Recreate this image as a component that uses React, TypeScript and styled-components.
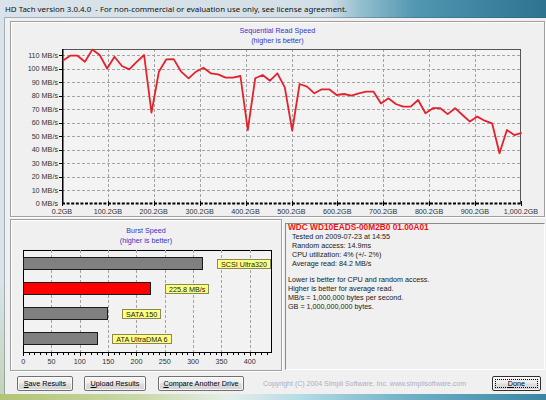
import React from 'react';
import styled, {createGlobalStyle} from 'styled-components';

const GlobalStyle = createGlobalStyle`
  html, body {
    margin: 0;
    padding: 0;
    background: #ffffff;
  }
  body {
    font-family: "Liberation Sans", Arial, sans-serif;
  }
`;

// sequential read samples, MB/s, evenly spread over the drive
const readSpeeds = [
  105.8, 109.5, 109.5, 105, 114, 110, 100, 108.7, 101.9, 99.4, 105, 110, 67.4,
  97.7, 106.8, 107, 97.7, 92.8, 97.7, 100.6, 96.5, 95.7, 93.3, 93.3, 94.5, 54.6,
  92.8, 95.2, 91, 96.5, 86.1, 54.1, 88.6, 86.6, 81.7, 84.7, 84.7, 80.5, 81.2, 80,
  81.7, 82.9, 82.9, 74.3, 78, 73.8, 71.8, 71.8, 76.8, 67, 70.7, 70.7, 66.4, 70.7,
  65.7, 60.8, 64.5, 61.5, 59.6, 37.4, 54.6, 50.9, 52.6,
];

const yLabels = [110, 100, 90, 80, 70, 60, 50, 40, 30, 20, 10, 0];
const xLabels = ['0.2GB', '100.2GB', '200.2GB', '300.2GB', '400.2GB', '500.2GB', '600.2GB', '700.2GB', '800.2GB', '900.2GB', '1,000.2GB'];

const burst = [
  {label: 'SCSI Ultra320', value: 320, color: '#808080'},
  {label: '225.8 MB/s', value: 225.8, color: '#ff0000'},
  {label: 'SATA 150', value: 150, color: '#808080'},
  {label: 'ATA UltraDMA 6', value: 133, color: '#808080'},
];
const burstTicks = [0, 50, 100, 150, 200, 250, 300, 350, 400];

const PLOT_W = 459;
const PLOT_H = 155;
const PX_PER_MB = 149 / 110;
const BURST_W = 249;
const BURST_H = 103;
const BURST_STEP = 28.33;

const Window = styled.div`
  width: 546px;
  height: 400px;
  display: flex;
  flex-direction: column;
  overflow: hidden;
  background:
    linear-gradient(180deg, rgba(255,255,255,0) 70%, rgba(168,190,120,0.45) 100%),
    linear-gradient(90deg, #d9e3e9 0%, #d3dfe6 60%, #93bfcf 66%, #5297b1 76%, #3f85a2 88%, #2e7390 100%);
`;

const TitleBar = styled.div`
  height: 18px;
  padding-left: 5px;
  display: flex;
  align-items: center;
  font-family: "Noto Sans", "Liberation Sans", sans-serif;
  font-size: 7.9px;
  color: #101010;
  white-space: pre;
`;

const Frame = styled.div`
  flex: 1;
  display: flex;
  padding: 0 7px 0 5px;
  min-height: 0;
`;

const BottomFrame = styled.div`
  height: 6px;
  background: linear-gradient(90deg, #b3c476 0%, #c9d8a8 25%, #e4eee8 42%, #b4dbe6 55%, #6fb0c6 75%, #3a86a3 100%);
`;

const Client = styled.div`
  flex: 1;
  display: flex;
  flex-direction: column;
  background: #f0f0f0;
  box-shadow: 0 0 0 1px rgba(60, 80, 100, 0.35);
  font-size: 7.2px;
  color: #202020;
`;

const GroupBox = styled.div`
  box-sizing: border-box;
  border: 1px solid #a0a0a0;
  box-shadow: inset 1px 1px 0 #ffffff, 1px 1px 0 #ffffff;
  display: flex;
  flex-direction: column;
`;

const TopPanel = styled(GroupBox)`
  margin: 3px 2px 0 5px;
  height: 196px;
  overflow: hidden;
`;

const ChartTitle = styled.div<{$lh: number; $top: number}>`
  color: #3535c8;
  text-align: center;
  line-height: ${p => p.$lh}px;
  padding-top: ${p => p.$top}px;
`;

const ChartBody = styled.div`
  display: grid;
  grid-template-columns: 51px ${PLOT_W}px;
  margin-top: 3px;
`;

const YAxis = styled.div`
  box-sizing: border-box;
  height: ${PLOT_H}px;
  padding: 6px 4px 0 0;
  display: flex;
  flex-direction: column;
  justify-content: space-between;
  align-items: flex-end;
`;

const YLabel = styled.div`
  height: 0;
  display: flex;
  align-items: center;
  white-space: nowrap;
  color: #303030;
`;

const Plot = styled.svg`
  display: block;
  overflow: visible;
`;

const XAxis = styled.div<{$offset: number; $step: number; $top: number}>`
  display: flex;
  margin-left: ${p => p.$offset}px;
  padding-top: ${p => p.$top}px;
  line-height: 14px;
  color: #303030;

  & > span {
    flex: 0 0 ${p => p.$step}px;
    text-align: center;
    white-space: nowrap;
  }
`;

const MiddleRow = styled.div`
  display: flex;
  margin: 2px 2px 0 5px;
  height: 152px;
`;

const BurstPanel = styled(GroupBox)`
  width: 272px;
`;

const BurstPlot = styled.div`
  position: relative;
  box-sizing: border-box;
  margin: 5px 0 0 12px;
  width: ${BURST_W}px;
  height: ${BURST_H}px;
  border: 1px solid #000000;
  background: #f2f2f2;
`;

const BurstGrid = styled.svg`
  position: absolute;
  left: -1px;
  top: -1px;
  overflow: visible;
`;

const BarList = styled.div`
  position: relative;
  display: flex;
  flex-direction: column;
  gap: 12px;
  padding-top: 6px;
  margin-left: -1px;
`;

const BarRow = styled.div`
  display: flex;
  align-items: center;
  height: 13px;
`;

const Bar = styled.div<{$color: string}>`
  box-sizing: border-box;
  height: 13px;
  background: ${p => p.$color};
  border: 1px solid #1a1a1a;
`;

const BarTag = styled.div`
  margin-left: 14px;
  padding: 0 3px;
  height: 10px;
  line-height: 10px;
  background: #ffff80;
  border: 1px solid #8a8a50;
  box-sizing: border-box;
  white-space: nowrap;
  color: #202020;
`;

const InfoPanel = styled.div`
  flex: 1;
  margin: 4px 0 1px 3px;
  padding-left: 2px;
  border-top: 1px solid #8a8a8a;
  border-left: 1px solid #8a8a8a;
  border-right: 1px solid #ffffff;
  border-bottom: 1px solid #ffffff;
  line-height: 9.1px;
`;

const DriveName = styled.div`
  color: #ee1111;
  font-weight: bold;
  font-size: 8.3px;
  line-height: 9px;
  margin-top: -1px;
  white-space: nowrap;
`;

const Stats = styled.div`
  padding-left: 4px;
`;

const Notes = styled.div`
  margin-top: 6.3px;
`;

const ButtonRow = styled.div`
  display: flex;
  align-items: center;
  height: 15px;
  margin-top: 5px;
  padding: 0 6px 0 12px;
`;

const Button = styled.button<{$w: number; $gap?: number; $primary?: boolean}>`
  width: ${p => p.$w}px;
  height: 15px;
  margin-left: ${p => p.$gap ?? 0}px;
  padding: 0;
  font-family: "Liberation Sans", Arial, sans-serif;
  font-size: 7.2px;
  color: #000000;
  border: 1px solid ${p => (p.$primary ? '#2f2f2f' : '#707070')};
  border-radius: 2px;
  background: linear-gradient(180deg, #f4f4f4 0%, #ececec 48%, #dedede 52%, #d2d2d2 100%);
  box-shadow: inset 0 0 0 1px rgba(255, 255, 255, 0.75);
  outline: ${p => (p.$primary ? '1px dotted #000' : 'none')};
  outline-offset: -4px;
  white-space: nowrap;
`;

const Copyright = styled.div`
  margin-left: 19px;
  color: #a9afc4;
  font-size: 7px;
  white-space: nowrap;
`;

const Spacer = styled.div`
  flex: 1;
`;

const ReadChart: React.FC = () => {
  const step = PLOT_W / (readSpeeds.length - 1);
  const points = readSpeeds
    .map((v, i) => `${(i * step + 0.7).toFixed(1)},${(PLOT_H - v * PX_PER_MB).toFixed(1)}`)
    .join(' ');
  const colStep = PLOT_W / 10;

  return (
    <Plot width={PLOT_W} height={PLOT_H}>
      <rect x={0} y={0} width={PLOT_W} height={PLOT_H} fill="#f3f3f3" />
      {yLabels.slice(0, -1).map(v => {
        const y = Math.round(PLOT_H - v * PX_PER_MB) + 0.5;
        return (
          <g key={v}>
            <line x1={0} x2={PLOT_W} y1={y} y2={y} stroke="#a4a4a4" strokeDasharray="3 2" />
            <line x1={-3} x2={0} y1={y} y2={y} stroke="#000" />
          </g>
        );
      })}
      {Array.from({length: 9}, (_, i) => {
        const x = Math.round((i + 1) * colStep) + 0.5;
        return <line key={i} x1={x} x2={x} y1={0} y2={PLOT_H} stroke="#a4a4a4" strokeDasharray="3 2" />;
      })}
      <line x1={0} x2={PLOT_W} y1={0.5} y2={0.5} stroke="#555" />
      <line x1={PLOT_W - 0.5} x2={PLOT_W - 0.5} y1={0} y2={PLOT_H} stroke="#555" />
      <line x1={0.75} x2={0.75} y1={0} y2={PLOT_H} stroke="#000" strokeWidth={1.5} />
      <line x1={0} x2={PLOT_W} y1={PLOT_H - 0.5} y2={PLOT_H - 0.5} stroke="#000" strokeWidth={2} strokeDasharray="3 1.6" />
      {Array.from({length: 11}, (_, i) => {
        const x = Math.round(i * colStep) + 0.5;
        return <line key={i} x1={x} x2={x} y1={PLOT_H - 3} y2={PLOT_H + 2} stroke="#000" />;
      })}
      <polyline points={points} fill="none" stroke="#e3222b" strokeWidth={1.8} strokeLinejoin="round" />
    </Plot>
  );
};

const BurstChart: React.FC = () => {
  const pxPerUnit = BURST_STEP / 50;
  return (
    <BurstPlot>
      <BurstGrid width={BURST_W} height={BURST_H}>
        {Array.from({length: 8}, (_, i) => {
          const x = Math.round((i + 1) * BURST_STEP) + 0.5;
          return <line key={i} x1={x} x2={x} y1={0} y2={BURST_H} stroke="#a4a4a4" strokeDasharray="3 2" />;
        })}
        {Array.from({length: 44}, (_, i) => {
          const x = Math.round(i * BURST_STEP / 5) + 0.5;
          return <line key={i} x1={x} x2={x} y1={BURST_H - 1} y2={BURST_H + (i % 5 === 0 ? 3 : 2)} stroke="#000" />;
        })}
      </BurstGrid>
      <BarList>
        {burst.map(b => (
          <BarRow key={b.label}>
            <Bar $color={b.color} style={{width: b.value * pxPerUnit}} />
            <BarTag>{b.label}</BarTag>
          </BarRow>
        ))}
      </BarList>
    </BurstPlot>
  );
};

const App: React.FC = () => {
  return (
    <>
      <GlobalStyle />
      <Window>
        <TitleBar>HD Tach version 3.0.4.0  - For non-commercial or evaluation use only, see license agreement.</TitleBar>
        <Frame>
          <Client>
            <TopPanel>
              <ChartTitle $lh={10} $top={4}>
                Sequential Read Speed<br />(higher is better)
              </ChartTitle>
              <ChartBody>
                <YAxis>
                  {yLabels.map(v => (
                    <YLabel key={v}>{v} MB/s</YLabel>
                  ))}
                </YAxis>
                <ReadChart />
              </ChartBody>
              <XAxis $offset={28} $step={PLOT_W / 10} $top={1}>
                {xLabels.map(l => (
                  <span key={l}>{l}</span>
                ))}
              </XAxis>
            </TopPanel>

            <MiddleRow>
              <BurstPanel>
                <ChartTitle $lh={9.5} $top={6}>
                  Burst Speed<br />(higher is better)
                </ChartTitle>
                <BurstChart />
                <XAxis $offset={-2} $step={BURST_STEP} $top={2}>
                  {burstTicks.map(t => (
                    <span key={t}>{t}</span>
                  ))}
                </XAxis>
              </BurstPanel>

              <InfoPanel>
                <DriveName>WDC WD10EADS-00M2B0 01.00A01</DriveName>
                <Stats>
                  Tested on 2009-07-23 at 14:55<br />
                  Random access: 14.9ms<br />
                  CPU utilization: 4% (+/- 2%)<br />
                  Average read: 84.2 MB/s
                </Stats>
                <Notes>
                  Lower is better for CPU and random access.<br />
                  Higher is better for average read.<br />
                  MB/s = 1,000,000 bytes per second.<br />
                  GB = 1,000,000,000 bytes.
                </Notes>
              </InfoPanel>
            </MiddleRow>

            <ButtonRow>
              <Button $w={56}><u>S</u>ave Results</Button>
              <Button $w={62} $gap={11}><u>U</u>pload Results</Button>
              <Button $w={86} $gap={12}><u>C</u>ompare Another Drive</Button>
              <Copyright>Copyright (C) 2004 Simpli Software, Inc. www.simplisoftware.com</Copyright>
              <Spacer />
              <Button $w={49} $primary><u>D</u>one</Button>
            </ButtonRow>
          </Client>
        </Frame>
        <BottomFrame />
      </Window>
    </>
  );
};

export default App;
